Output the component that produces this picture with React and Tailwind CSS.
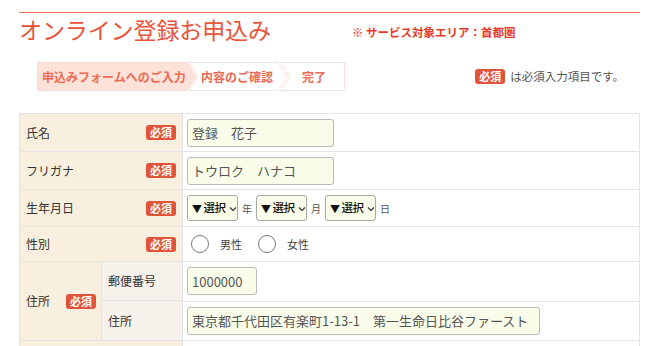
import React from "react";

const font = "font-['Noto_Sans_CJK_JP','Noto_Sans',sans-serif]";

function Badge() {
  return (
    <span className="inline-flex h-[15px] w-[30px] items-center justify-center rounded-[3px] bg-[#e1543c] text-[11px] font-bold leading-none text-white">
      必須
    </span>
  );
}

function LabelCell({ label }) {
  return (
    <td className="w-[162px] border border-[#e3e3e3] bg-[#f8efde] px-[6px] text-[12px] text-[#333]">
      <div className="flex items-center justify-between">
        <span>{label}</span>
        <Badge />
      </div>
    </td>
  );
}

function TextBox({ value, width }) {
  return (
    <input
      readOnly
      value={value}
      className={`h-[28px] rounded-[3px] border border-[#b9b9b9] bg-[#f9fde9] pl-[4px] text-[13px] text-[#555] outline-none ${width}`}
    />
  );
}

function SelectBox() {
  return (
    <span className="inline-flex h-[26px] w-[51px] items-center gap-[2px] whitespace-nowrap rounded-[3px] border border-[#aaa] bg-[#f9fde9] pl-[4px] text-[11.5px] font-medium tracking-[-0.5px] text-[#111]">
      <span className="text-[10px]">▼</span>
      選択
      <svg width="8" height="6" viewBox="0 0 8 6" className="ml-[1px] mt-[1px] shrink-0">
        <path d="M1 1.5 L4 4.5 L7 1.5" fill="none" stroke="#333" strokeWidth="1.2" />
      </svg>
    </span>
  );
}

function Radio({ label }) {
  return (
    <span className="inline-flex items-center">
      <span className="h-[18px] w-[18px] rounded-full border border-[#777] bg-white" />
      <span className="ml-[11px] text-[11px] text-[#444]">{label}</span>
    </span>
  );
}

function Steps() {
  return (
    <div className="relative h-[29px] w-[308px]">
      <svg className="absolute inset-0" width="308" height="29" viewBox="0 0 308 29">
        <polygon
          points="0.5,0.5 150,0.5 159,14.5 150,28.5 0.5,28.5"
          fill="#fde2da"
          stroke="#f6c4b8"
          strokeDasharray="1 1"
        />
        <polygon
          points="152,0.5 241,0.5 250,14.5 241,28.5 152,28.5 161,14.5"
          fill="#fff"
          stroke="#f6c4b8"
          strokeDasharray="1 1"
        />
        <polygon
          points="244,0.5 307.5,0.5 307.5,28.5 244,28.5 253,14.5"
          fill="#fff"
          stroke="#f6c4b8"
          strokeDasharray="1 1"
        />
      </svg>
      <div className="relative flex h-full items-center text-[12px] font-bold text-[#ec6a52]">
        <span className="w-[164px] pl-[5px]">申込みフォームへのご入力</span>
        <span className="w-[101px]">内容のご確認</span>
        <span>完了</span>
      </div>
    </div>
  );
}

export default function App() {
  return (
    <div className={`h-[346px] overflow-hidden bg-white ${font}`}>
      <div className="ml-[19px] mr-[10px] pt-[12px]">
        {/* Header */}
        <div className="flex items-center border-t border-[#f07459] pt-[2px]">
          <h1 className="text-[23px] font-normal leading-[28px] tracking-[-0.1px] text-[#e9553b]">
            オンライン登録お申込み
          </h1>
          <p className="ml-[81px] mt-[7px] text-[11.5px] font-bold text-[#e83a28]">
            ※ サービス対象エリア：首都圏
          </p>
        </div>

        {/* Steps */}
        <div className="mt-[19px] flex items-center justify-between pl-[18px] pr-[16px]">
          <Steps />
          <div className="flex items-center gap-[5px] text-[11.5px] text-[#555]">
            <Badge />
            <span>は必須入力項目です。</span>
          </div>
        </div>

        {/* Form table */}
        <table className="mt-[22px] w-full border-collapse border border-[#dcdcdc] text-[12px] text-[#333]">
          <tbody>
            <tr className="h-[38px]">
              <LabelCell label="氏名" />
              <td className="border border-[#e3e3e3] pl-[4px]">
                <TextBox value="登録　花子" width="w-[147px]" />
              </td>
            </tr>
            <tr className="h-[38px]">
              <LabelCell label="フリガナ" />
              <td className="border border-[#e3e3e3] pl-[4px]">
                <TextBox value="トウロク　ハナコ" width="w-[147px]" />
              </td>
            </tr>
            <tr className="h-[37px]">
              <LabelCell label="生年月日" />
              <td className="border border-[#e3e3e3] pl-[4px]">
                <div className="flex items-center text-[10px] text-[#555]">
                  <SelectBox />
                  <span className="mx-[4px]">年</span>
                  <SelectBox />
                  <span className="mx-[4px]">月</span>
                  <SelectBox />
                  <span className="mx-[4px]">日</span>
                </div>
              </td>
            </tr>
            <tr className="h-[35px]">
              <LabelCell label="性別" />
              <td className="border border-[#e3e3e3] pl-[8px]">
                <div className="flex items-center gap-[16px]">
                  <Radio label="男性" />
                  <Radio label="女性" />
                </div>
              </td>
            </tr>
            <tr className="h-[39px]">
              <td rowSpan={2} className="border border-[#e3e3e3] bg-[#f8efde] p-0 text-[12px]">
                <div className="flex">
                  <div className="flex w-[81px] items-center justify-between pl-[6px] pr-[5px]">
                    <span>住所</span>
                    <Badge />
                  </div>
                  <div className="flex w-[81px] flex-col border-l border-[#e3e3e3] bg-[#f6f1ea]">
                    <div className="flex h-[39px] items-center border-b border-[#e3e3e3] pl-[6px]">
                      郵便番号
                    </div>
                    <div className="flex h-[39px] items-center pl-[6px]">住所</div>
                  </div>
                </div>
              </td>
              <td className="border border-[#e3e3e3] pl-[4px]">
                <TextBox value="1000000" width="w-[70px]" />
              </td>
            </tr>
            <tr className="h-[39px]">
              <td className="border border-[#e3e3e3] pl-[4px]">
                <TextBox
                  value="東京都千代田区有楽町1-13-1　第一生命日比谷ファースト"
                  width="w-[353px]"
                />
              </td>
            </tr>
            <tr className="h-[38px]">
              <td className="w-[162px] border border-[#e3e3e3] bg-[#f8efde]" />
              <td className="border border-[#e3e3e3]" />
            </tr>
          </tbody>
        </table>
      </div>
    </div>
  );
}
